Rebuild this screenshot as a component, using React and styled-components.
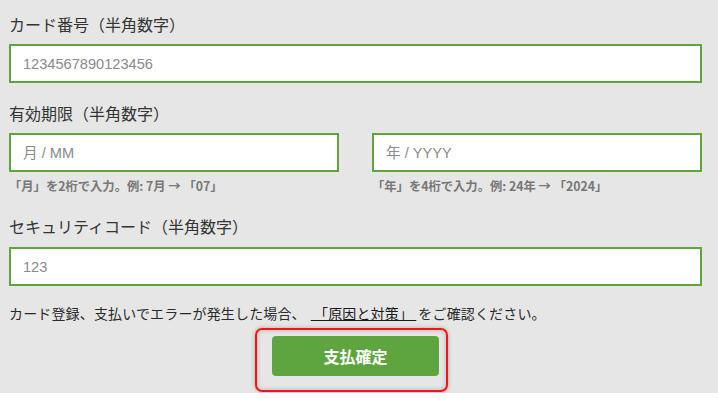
import React from 'react'
import styled, { createGlobalStyle } from 'styled-components'

const Green = '#5ea53f'
const Jp = `"Noto Sans CJK JP", "Noto Sans", sans-serif`

const GlobalStyle = createGlobalStyle`
  html, body {
    margin: 0;
    padding: 0;
    background: #fff;
  }
  * { box-sizing: border-box; }
`

const Page = styled.div`
  background: #e6e6e6;
  padding: 12px 16px 17px 9px;
  font-family: ${Jp};
  color: #333;
`

const Form = styled.form`
  width: 693px;
  display: flex;
  flex-direction: column;
`

const Label = styled.div`
  font-size: 16px;
  line-height: 24px;
  height: 24px;
  margin-top: ${({ $top }) => $top || 0}px;
`

const Input = styled.input`
  display: block;
  width: 100%;
  height: 39px;
  margin-top: ${({ $top }) => $top || 8}px;
  border: 2.5px solid ${Green};
  background: #fff;
  padding: 0 0 0 12px;
  font-family: "Liberation Sans", Arial, ${Jp};
  font-size: 14.6px;
  outline: none;
  &::placeholder {
    color: #8a8a8a;
  }
`

const Row = styled.div`
  display: grid;
  grid-template-columns: 330px 330px;
  justify-content: space-between;
`

const Field = styled.div`
  display: flex;
  flex-direction: column;
`

const Hint = styled.div`
  margin-top: 6px;
  font-size: 12.3px;
  line-height: 16px;
  font-weight: 700;
  color: #777;
`

const Notice = styled.p`
  margin: 17px 0 0;
  font-size: 14px;
  line-height: 20px;
  letter-spacing: 0.15px;
  color: #2a2a2a;
`

const NoticeLink = styled.a`
  color: #1a1a1a;
  text-decoration: underline;
  margin: 0 2px 0 5px;
`

const Actions = styled.div`
  display: flex;
  justify-content: center;
  margin-top: 13px;
`

const Highlight = styled.div`
  position: relative;
  &::before {
    content: '';
    position: absolute;
    top: -8px;
    left: -17px;
    right: -9px;
    bottom: -16px;
    border: 2px solid #ff1010;
    border-radius: 7px;
    box-shadow: 0 0 4px rgba(0, 0, 0, 0.25), inset 0 0 5px rgba(0, 0, 0, 0.2);
    pointer-events: none;
  }
`

const Submit = styled.button`
  display: block;
  width: 167px;
  height: 40px;
  border: none;
  border-radius: 4px;
  background: ${Green};
  color: #fff;
  font-family: ${Jp};
  font-size: 16px;
  font-weight: 700;
  cursor: pointer;
`

export default function App() {
  return (
    <>
      <GlobalStyle />
      <Page>
        <Form onSubmit={(e) => e.preventDefault()}>
          <Label>カード番号（半角数字）</Label>
          <Input placeholder="1234567890123456" />

          <Label $top={18}>有効期限（半角数字）</Label>
          <Row>
            <Field>
              <Input placeholder="月 / MM" />
              <Hint>「月」を2桁で入力。例: 7月 → 「07」</Hint>
            </Field>
            <Field>
              <Input placeholder="年 / YYYY" />
              <Hint>「年」を4桁で入力。例: 24年 → 「2024」</Hint>
            </Field>
          </Row>

          <Label $top={20}>セキュリティコード（半角数字）</Label>
          <Input $top={9} placeholder="123" />

          <Notice>
            カード登録、支払いでエラーが発生した場合、
            <NoticeLink href="#">{'\u00a0「原因と対策」\u00a0'}</NoticeLink>
            をご確認ください。
          </Notice>

          <Actions>
            <Highlight>
              <Submit type="submit">支払確定</Submit>
            </Highlight>
          </Actions>
        </Form>
      </Page>
    </>
  )
}
